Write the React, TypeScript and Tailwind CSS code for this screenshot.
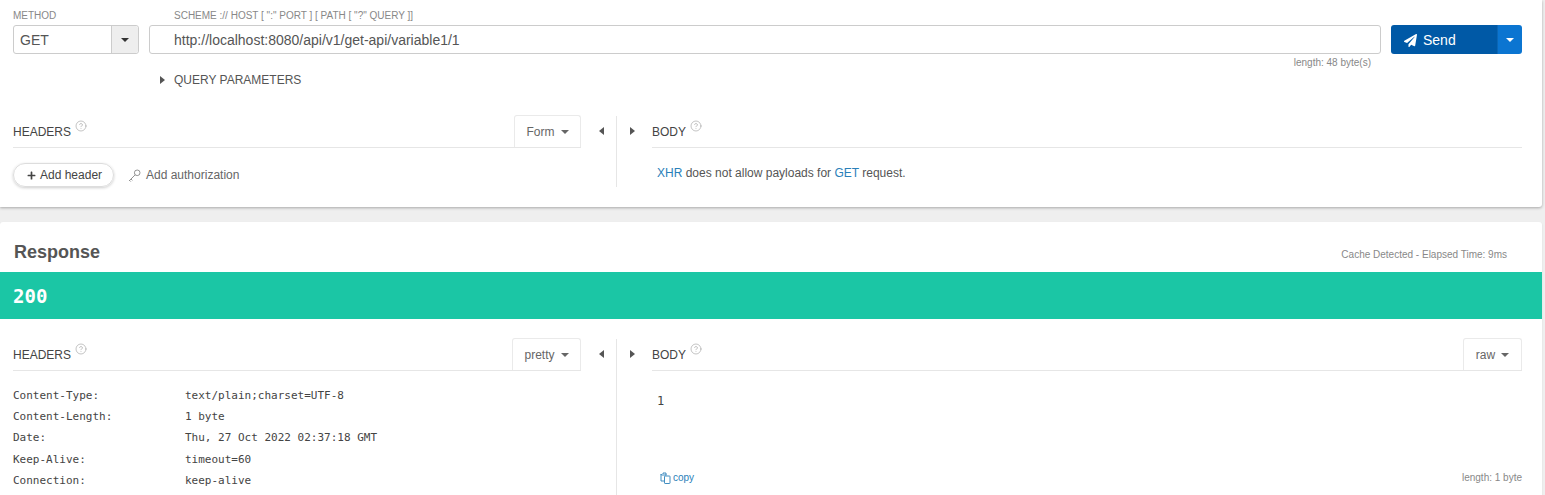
import React from "react";
import { CircleHelp } from "lucide-react";
import { FaPaperPlane, FaPlus } from "react-icons/fa";

const Caret = ({ className = "" }: { className?: string }) => (
  <span className={"inline-block w-0 h-0 border-x-[4px] border-x-transparent border-t-[4px] " + className} />
);
const Tri = ({ dir }: { dir: "l" | "r" }) => (
  <span
    className={
      "inline-block w-0 h-0 border-y-[4px] border-y-transparent " +
      (dir === "l" ? "border-r-[5px] border-r-[#555]" : "border-l-[5px] border-l-[#555]")
    }
  />
);
const Label = ({ children }: { children: React.ReactNode }) => (
  <div className="flex items-start text-[12px] leading-[14px] text-[#444] uppercase">
    <span className="mt-[2px]">{children}</span>
    <CircleHelp className="ml-[4px] -mt-[3px] text-[#888]" size={12} strokeWidth={1} />
  </div>
);
const Tab = ({ label, w }: { label: string; w: string }) => (
  <div className={"h-[32px] border border-b-0 border-[#eaeaea] rounded-t-[3px] flex items-center justify-center gap-[6px] text-[12px] text-[#666] bg-white " + w}>
    {label}
    <Caret className="border-t-[#666]" />
  </div>
);
const Row = ({ k, v }: { k: string; v: string }) => (
  <div className="flex h-[21.3px] items-center">
    <span className="w-[172px]">{k}</span>
    <span>{v}</span>
  </div>
);
const KeyIcon = () => (
  <svg width="13" height="13" viewBox="0 0 13 13" fill="none" stroke="#888" strokeWidth="0.9">
    <circle cx="9.2" cy="3.8" r="2.8" />
    <path d="M7.2 5.8 L1 12 M3 10 L4.4 11.4 M1.6 11.4 L2.8 12.6" />
  </svg>
);
const CopyIcon = () => (
  <svg width="11" height="12" viewBox="0 0 11 12" fill="none" stroke="#2a80b9" strokeWidth="0.9">
    <path d="M6.5 3 H2 Q1 3 1 2 V9 H4" />
    <path d="M3 2 V1 H6 V3" />
    <rect x="4.5" y="4" width="5.5" height="7.5" rx="0.6" />
  </svg>
);

export default function App() {
  return (
    <div className="h-[495px] overflow-hidden bg-[#efefef] font-['Liberation_Sans',Arial,sans-serif]">
      <div className="w-[1542px] h-[207px] bg-white shadow-[0_1px_3px_rgba(0,0,0,0.3)] rounded-br-[3px] flex flex-col">
        <div className="flex pl-[13px] pt-[10px]">
          <div className="w-[126px]">
            <div className="text-[10px] leading-[12px] text-[#888] h-[15px]">METHOD</div>
            <div className="h-[29px] flex border border-[#ccc] rounded-[3px] text-[14px] text-[#555]">
              <div className="w-[97px] pl-[6px] pt-[2px] flex items-center">GET</div>
              <div className="flex-1 border-l border-[#ccc] bg-[#eee] flex items-center justify-center rounded-r-[3px]">
                <Caret className="border-t-[#333]" />
              </div>
            </div>
          </div>
          <div className="w-[1232px] ml-[10px]">
            <div className="text-[10px] leading-[12px] text-[#888] h-[15px] pl-[25px]">
              SCHEME :// HOST [ ":" PORT ] [ PATH [ "?" QUERY ]]
            </div>
            <div className="h-[29px] border border-[#ccc] rounded-[3px] pl-[24px] pt-[2px] flex items-center text-[14px] text-[#555]">
              http://localhost:8080/api/v1/get-api/variable1/1
            </div>
            <div className="text-[10px] leading-[12px] text-[#888] text-right pr-[10px] mt-[3px]">length: 48 byte(s)</div>
            <div className="flex items-center mt-[4px] text-[12px] leading-[14px] text-[#555]">
              <span className="ml-[11px] w-[14px] flex"><Tri dir="r" /></span>
              QUERY PARAMETERS
            </div>
          </div>
          <div className="w-[131px] ml-[10px] mt-[15px] h-[29px] flex rounded-[3px] overflow-hidden text-white text-[14px]">
            <div className="w-[106px] bg-[#0059a6] flex items-center pl-[13px] pt-[2px] gap-[6px]">
              <FaPaperPlane size={13} />
              Send
            </div>
            <div className="flex-1 bg-[#0b75d1] border-l border-[#0b66b5] flex items-center justify-center">
              <Caret className="border-t-white" />
            </div>
          </div>
        </div>

        <div className="flex mt-[29px] flex-1 pb-[20px]">
          <div className="w-[568px] ml-[13px] shrink-0">
            <div className="h-[32px] border-b border-[#e6e6e6] flex items-end justify-between">
              <div className="pb-[8px]"><Label>Headers</Label></div>
              <Tab label="Form" w="w-[67px]" />
            </div>
            <div className="flex items-center mt-[15px] gap-[14px]">
              <div className="w-[101px] h-[24px] rounded-full border border-[#ddd] shadow-[0_1px_3px_rgba(0,0,0,0.2)] flex items-center pl-[13px] gap-[4px] text-[12px] text-[#444] whitespace-nowrap">
                <FaPlus size={9} />
                Add header
              </div>
              <div className="flex items-center gap-[5px] text-[12px] text-[#666]">
                <KeyIcon />
                Add authorization
              </div>
            </div>
          </div>
          <div className="w-[36px] shrink-0 border-r border-[#e6e6e6] flex justify-center pt-[11px] h-full items-start pl-[5px]">
            <Tri dir="l" />
          </div>
          <div className="w-[35px] flex justify-start pt-[11px] pl-[13px] shrink-0">
            <Tri dir="r" />
          </div>
          <div className="w-[870px]">
            <div className="h-[32px] border-b border-[#e6e6e6] flex items-end">
              <div className="pb-[8px]"><Label>Body</Label></div>
            </div>
            <div className="pl-[5px] mt-[18px] text-[12px] leading-[14px] text-[#555]">
              <span className="text-[#2a80b9]">XHR</span> does not allow payloads for <span className="text-[#2a80b9]">GET</span> request.
            </div>
          </div>
        </div>
      </div>

      <div className="mt-[15px] w-[1542px] h-[273px] bg-white rounded-t-[3px] shadow-[0_1px_2px_rgba(0,0,0,0.1)] flex flex-col">
        <div className="h-[50px] flex justify-between items-center pl-[14px] pr-[35px] pt-[10px]">
          <span className="text-[18px] font-bold text-[#555]">Response</span>
          <span className="text-[10px] text-[#888] mt-[4px]">Cache Detected - Elapsed Time: 9ms</span>
        </div>
        <div className="h-[47px] bg-[#1bc6a5] flex items-center pl-[13px] pt-[2px] text-[19px] font-bold text-white font-['DejaVu_Sans_Mono',monospace]">
          200
        </div>
        <div className="flex flex-1 pt-[20px]">
          <div className="w-[568px] ml-[13px] shrink-0">
            <div className="h-[32px] border-b border-[#e6e6e6] flex items-end justify-between">
              <div className="pb-[8px]"><Label>Headers</Label></div>
              <Tab label="pretty" w="w-[69px]" />
            </div>
            <div className="mt-[14px] text-[11px] leading-[14px] text-[#444] font-['DejaVu_Sans_Mono',monospace]">
              <Row k="Content-Type:" v="text/plain;charset=UTF-8" />
              <Row k="Content-Length:" v="1 byte" />
              <Row k="Date:" v="Thu, 27 Oct 2022 02:37:18 GMT" />
              <Row k="Keep-Alive:" v="timeout=60" />
              <Row k="Connection:" v="keep-alive" />
            </div>
          </div>
          <div className="w-[36px] shrink-0 border-r border-[#e6e6e6] flex justify-center pt-[11px] items-start pl-[5px]">
            <Tri dir="l" />
          </div>
          <div className="w-[35px] flex justify-start pt-[11px] pl-[13px] shrink-0">
            <Tri dir="r" />
          </div>
          <div className="w-[870px] flex flex-col">
            <div className="h-[32px] border-b border-[#e6e6e6] flex items-end justify-between">
              <div className="pb-[8px]"><Label>Body</Label></div>
              <Tab label="raw" w="w-[59px]" />
            </div>
            <div className="pl-[5px] mt-[23px] text-[12px] leading-[14px] text-[#444] font-['DejaVu_Sans_Mono',monospace]">1</div>
            <div className="flex justify-between items-center mt-[62px] pl-[8px] text-[10px]">
              <span className="flex items-center gap-[2px] text-[#2a80b9]">
                <CopyIcon />
                copy
              </span>
              <span className="text-[#888]">length: 1 byte</span>
            </div>
          </div>
        </div>
      </div>
    </div>
  );
}
